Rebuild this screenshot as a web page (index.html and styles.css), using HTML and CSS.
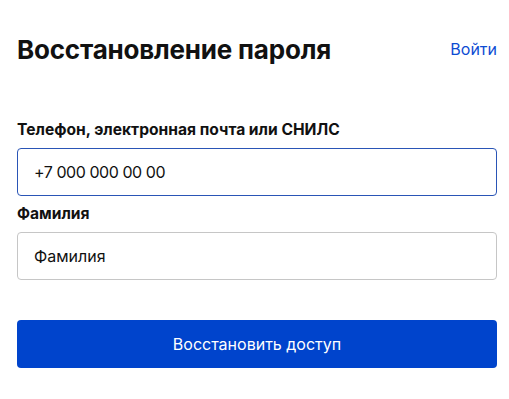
FILE: index.html
```html
<!DOCTYPE html>
<html lang="ru">
<head>
  <meta charset="UTF-8">
  <title>Восстановление пароля</title>
  <link rel="stylesheet" href="styles.css">
</head>
<body>
  <div class="container">
    <div class="header">
      <h1>Восстановление пароля</h1>
      <a href="#" class="login-link">Войти</a>
    </div>

    <form>
      <div class="form-group">
        <label for="login">Телефон, электронная почта или СНИЛС</label>
        <input type="text" id="login" class="active" value="+7 000 000 00 00">
      </div>
      <div class="form-group">
        <label for="lastname">Фамилия</label>
        <input type="text" id="lastname" placeholder="Фамилия">
      </div>
      <div class="form-actions">
        <button type="submit">Восстановить доступ</button>
      </div>
    </form>
  </div>
</body>
</html>
```

FILE: styles.css
```css
body {
  font-family: Inter, "Noto Sans", sans-serif;
  background-color: #fff;
  color: #0b1f33;
  margin: 0;
  padding: 0;
}
.container {
  width: 480px;
  margin: 0 0 0 17px;
  padding-top: 30px;
}
.header {
  display: flex;
  justify-content: space-between;
  align-items: center;
  height: 38px;
}
h1 {
  margin: 0;
  font-size: 26px;
  font-weight: 700;
  color: #111;
  letter-spacing: -0.2px;
}
.login-link {
  font-size: 16px;
  color: #0d4cd3;
  text-decoration: none;
}
form {
  margin-top: 52px;
}
.form-group {
  display: flex;
  flex-direction: column;
  margin-bottom: 8px;
}
.form-group label {
  font-size: 15.6px;
  font-weight: 700;
  color: #111;
  line-height: 20px;
  margin-bottom: 8px;
}
.form-group input {
  height: 48px;
  box-sizing: border-box;
  padding: 0 16px;
  font-family: inherit;
  font-size: 16px;
  color: #111;
  border: 1px solid #c6c6c6;
  border-radius: 4px;
  outline: none;
}
.form-group input::placeholder {
  color: #111;
}
.form-group input.active {
  border-color: #2a55b6;
  letter-spacing: -0.45px;
}
.form-actions {
  margin-top: 40px;
}
.form-actions button {
  width: 100%;
  height: 48px;
  border: none;
  border-radius: 4px;
  background-color: #0044cc;
  color: #fff;
  font-family: inherit;
  font-size: 16px;
  cursor: pointer;
}
```
